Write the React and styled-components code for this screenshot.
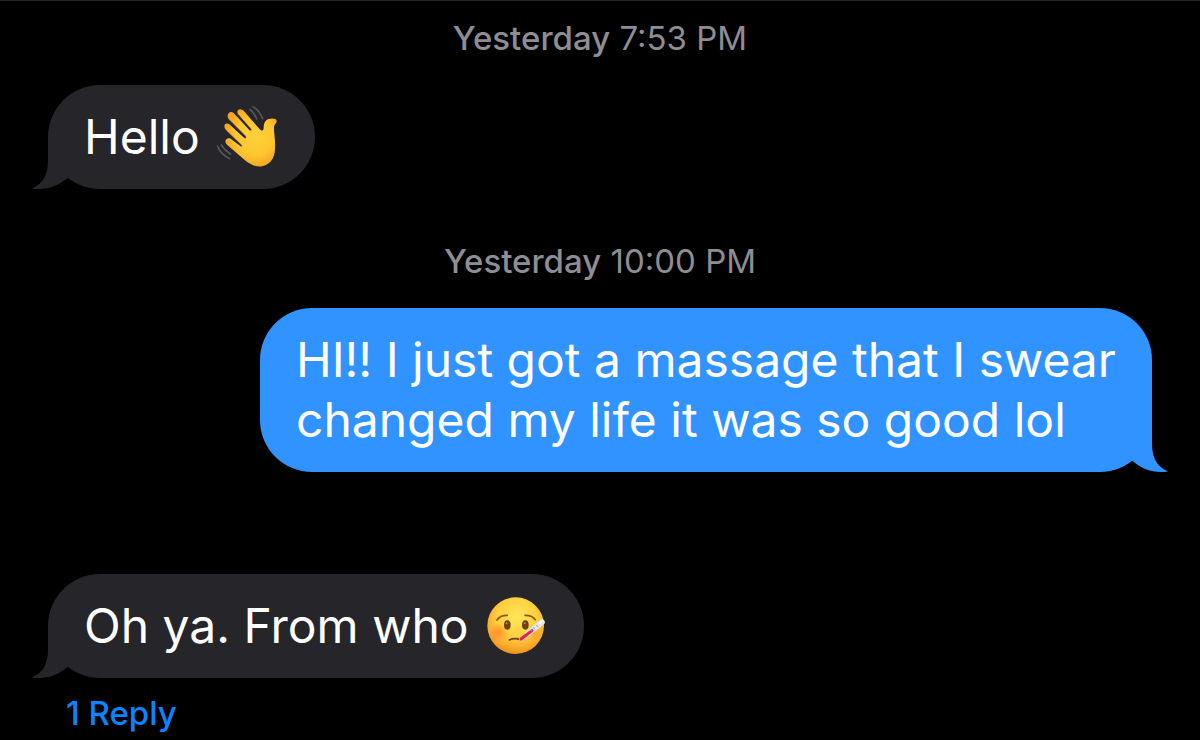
import React from 'react';
import styled, { createGlobalStyle } from 'styled-components';

const GlobalStyle = createGlobalStyle`
  * { box-sizing: border-box; }
  body {
    margin: 0;
    background: #000;
    color: #fff;
    font-family: Inter, "Liberation Sans", sans-serif;
  }
`;

const Thread = styled.main`
  display: flex;
  flex-direction: column;
  min-height: 100vh;
  padding: 17px 48px 6px;
  border-top: 1px solid #242425;
  background: #000;
`;

const Timestamp = styled.time`
  display: block;
  margin: ${p => (p.$later ? 52 : 0)}px 0 27px;
  text-align: center;
  font-size: 33px;
  line-height: 40px;
  color: #8d8d93;
`;

const Day = styled.span`
  font-weight: 500;
`;

const Bubble = styled.div`
  position: relative;
  display: flex;
  align-items: center;
  gap: 17px;
  align-self: ${p => (p.$sent ? 'flex-end' : 'flex-start')};
  max-width: 80.8%;
  margin-top: ${p => (p.$spaced ? 102 : 0)}px;
  padding: 22px 36px;
  border-radius: 52px;
  background: ${p => (p.$sent ? '#3093ff' : '#26252a')};
  color: #fff;
`;

const Message = styled.p`
  margin: 0;
  font-size: 48px;
  line-height: 60px;
`;

const TailShape = styled.svg`
  position: absolute;
  bottom: 0;
  width: 60px;
  height: 52px;
  ${p => (p.$sent ? 'right: -16px; transform: scaleX(-1);' : 'left: -16px;')}
  fill: ${p => (p.$sent ? '#3093ff' : '#26252a')};
`;

const EmojiArt = styled.svg`
  flex: none;
  width: 60px;
  height: 60px;
  margin-right: 2px;
  overflow: visible;
`;

const ReplyButton = styled.button`
  align-self: flex-start;
  margin: 15px 0 0 18px;
  padding: 0;
  border: 0;
  background: none;
  color: #0b84ff;
  font-family: inherit;
  font-size: 33px;
  font-weight: 500;
  line-height: 40px;
  cursor: pointer;
`;

function Tail({ sent }) {
  return (
    <TailShape $sent={sent} viewBox="0 0 60 52" aria-hidden="true">
      <path d="M16 0V23C16 37 12 46 0 51.4C13 53.500 25 50 35.500 41L44 30V0Z" />
    </TailShape>
  );
}

function WavingHand() {
  return (
    <EmojiArt viewBox="20 36 180 180" role="img" aria-label="waving hand">
      <defs>
        <radialGradient id="hand" gradientUnits="userSpaceOnUse" cx="132" cy="125" r="95">
          <stop offset="0" stopColor="#ffd13c" />
          <stop offset="0.6" stopColor="#ffc62f" />
          <stop offset="1" stopColor="#f4a321" />
        </radialGradient>
      </defs>
      <path
        fill="url(#hand)"
        d="M83 57C77 47 86 38 97 45C104 50 134 88 151 105C155 109 160 106 160 99C160 86 164 75 175 72C185 69 198 70 199 78C200 84 192 87 191 96C190 110 196 132 194 163C193 191 178 210 155 214C136 217 119 208 104 196L50 149C39 139 48 125 61 131L91 154C94 156 97 153 94 150L48 106C36 94 44 79 57 88L101 128C105 132 110 128 106 123L56 73C45 61 58 45 70 54L117 105C121 109 126 105 122 101Z"
      />
      <path
        d="M83 57L122 101C126 106 121 109 117 105M56 73L106 123C110 128 105 132 101 128M48 106L94 150C97 153 94 156 91 154"
        fill="none"
        stroke="#c9811a"
        strokeWidth="3"
        strokeLinecap="round"
        opacity="0.55"
      />
      <path
        d="M119 43Q133 55 139 72M128 35Q147 47 157 71M22 154Q32 178 58 191M33 150Q43 166 60 177"
        fill="none"
        stroke="#55555b"
        strokeWidth="5"
        strokeLinecap="round"
      />
    </EmojiArt>
  );
}

function ThermometerFace() {
  return (
    <EmojiArt viewBox="24 19 180 180" role="img" aria-label="face with thermometer">
      <defs>
        <radialGradient id="face" gradientUnits="userSpaceOnUse" cx="118" cy="82" r="112">
          <stop offset="0" stopColor="#ffe55b" />
          <stop offset="0.5" stopColor="#ffd23f" />
          <stop offset="0.8" stopColor="#fbb02d" />
          <stop offset="1" stopColor="#ee8f1e" />
        </radialGradient>
        <radialGradient id="flush">
          <stop offset="0" stopColor="#ff7a2e" stopOpacity="0.7" />
          <stop offset="1" stopColor="#ff7a2e" stopOpacity="0" />
        </radialGradient>
      </defs>
      <circle cx="113" cy="108" r="85" fill="url(#face)" />
      <circle cx="62" cy="128" r="29" fill="url(#flush)" />
      <circle cx="168" cy="128" r="24" fill="url(#flush)" opacity="0.6" />
      <ellipse cx="88" cy="106" rx="10" ry="14" fill="#6b4310" />
      <ellipse cx="142" cy="106" rx="10" ry="14" fill="#6b4310" />
      <circle cx="86" cy="101" r="3" fill="#b78d45" />
      <circle cx="140" cy="101" r="3" fill="#b78d45" />
      <path
        d="M57 91Q67 76 88 77M141 77Q162 76 172 90"
        fill="none"
        stroke="#8a5714"
        strokeWidth="5"
        strokeLinecap="round"
      />
      <path d="M94 151Q108 144 126 149" fill="none" stroke="#6b4310" strokeWidth="5" strokeLinecap="round" />
      <path d="M130 148L157 127" stroke="#e8b7b7" strokeWidth="15" strokeLinecap="round" />
      <path d="M150 131L192 98" stroke="#e4e4ea" strokeWidth="17" strokeLinecap="round" />
      <path d="M129 148L162 123" stroke="#d62b3c" strokeWidth="9" strokeLinecap="round" />
      <path d="M166 113L171 119M175 106L180 112M157 120L162 126" stroke="#9a9aa4" strokeWidth="3" />
      <path d="M186 99L193 94" stroke="#fff" strokeWidth="8" strokeLinecap="round" />
    </EmojiArt>
  );
}

export default function App() {
  return (
    <>
      <GlobalStyle />
      <Thread>
        <Timestamp><Day>Yesterday</Day> 7:53 PM</Timestamp>
        <Bubble>
          <Tail />
          <Message>Hello</Message>
          <WavingHand />
        </Bubble>
        <Timestamp $later><Day>Yesterday</Day> 10:00 PM</Timestamp>
        <Bubble $sent>
          <Tail sent />
          <Message>HI!! I just got a massage that I swear changed my life it was so good lol</Message>
        </Bubble>
        <Bubble $spaced>
          <Tail />
          <Message>Oh ya. From who</Message>
          <ThermometerFace />
        </Bubble>
        <ReplyButton type="button">1 Reply</ReplyButton>
      </Thread>
    </>
  );
}
